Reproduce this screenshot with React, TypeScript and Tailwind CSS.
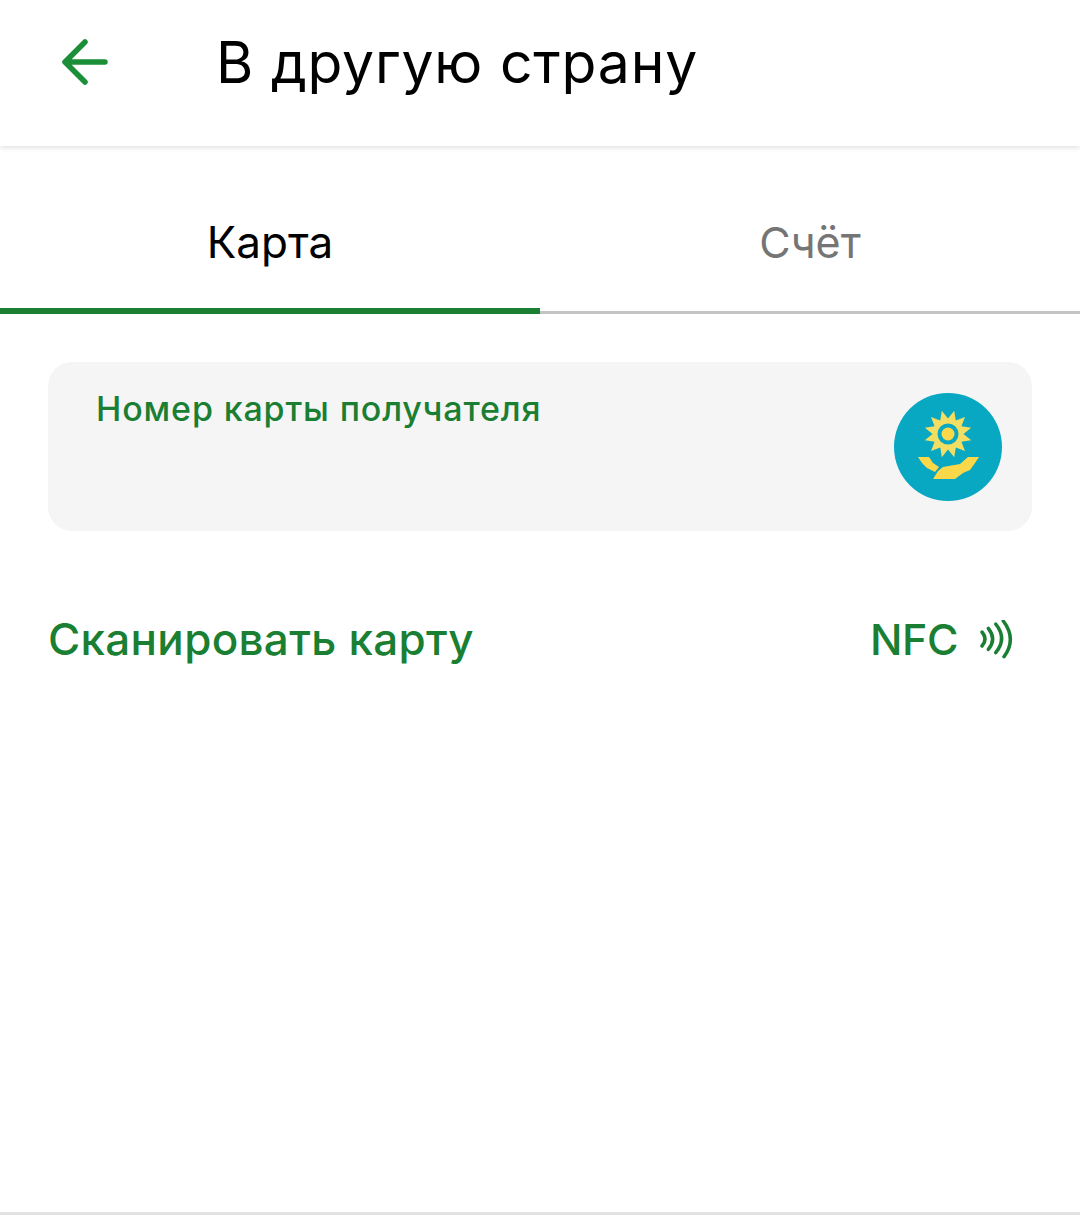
const sunRays = Array.from({ length: 24 }, (_, i) => {
  const angle = (i * Math.PI) / 12 - Math.PI / 2 + Math.PI / 12;
  const r = i % 2 === 0 ? 24 : 15.5;
  return `${(54 + r * Math.cos(angle)).toFixed(1)},${(41 + r * Math.sin(angle)).toFixed(1)}`;
}).join(" ");

function KzFlag() {
  return (
    <svg width="108" height="108" viewBox="0 0 108 108" className="shrink-0">
      <circle cx="54" cy="54" r="54" fill="#08a8c2" />
      <polygon points={sunRays} fill="#f2de62" />
      <circle cx="54" cy="41" r="10.5" fill="#08a8c2" />
      <circle cx="54" cy="41" r="6.5" fill="#fbd84a" />
      <polygon
        points="24,64 35,64 39,70 45,74 41,79 33,75 28,70"
        fill="#fbd84a"
      />
      <polygon
        points="85,64 74,64 66,71 49,74 44,78 39,86 61,86 69,80 76,77 81,70"
        fill="#fbd84a"
      />
    </svg>
  );
}

function NfcWaves() {
  return (
    <svg
      width="33"
      height="40"
      viewBox="0 0 33 40"
      fill="none"
      stroke="#1a7f32"
      strokeWidth="3.5"
      strokeLinecap="round"
      className="shrink-0"
    >
      <path d="M2 12Q8 19 2 26" />
      <path d="M8.3 8.3Q17 19 8.3 29.3" />
      <path d="M15.7 4Q27.5 18.5 15.7 32.7" />
      <path d="M23.3 1Q37 19 24 36.7" />
    </svg>
  );
}

export default function App() {
  return (
    <div className="w-[1080px] h-[1225px] overflow-hidden bg-white flex flex-col font-['Inter',sans-serif]">
      {/* Header */}
      <header className="h-[146px] shrink-0 flex items-center pl-[60px] pb-[20px] shadow-[0_2px_5px_rgba(0,0,0,0.12)]">
        <svg
          width="50"
          height="48"
          viewBox="0 0 50 48"
          fill="none"
          stroke="#1a8f37"
          strokeWidth="5.5"
          strokeLinecap="round"
          strokeLinejoin="round"
          className="shrink-0"
        >
          <path d="M5 23H45M25 3L5 23L25 43" />
        </svg>
        <h1 className="ml-[106px] -mt-[2px] text-[57px] tracking-[0.8px] leading-none font-normal text-black">
          В другую страну
        </h1>
      </header>

      {/* Tabs */}
      <div className="flex h-[168px] shrink-0">
        <div className="flex-1 flex items-center justify-center pt-[30px] border-b-[6px] border-[#1a7f32] text-[44px] text-black">
          Карта
        </div>
        <div className="flex-1 flex flex-col justify-end">
          <div className="flex-1 flex items-center justify-center pt-[27px] text-[43px] text-[#757575]">
            Счёт
          </div>
          <div className="h-[3px] bg-[#c4c4c4]" />
        </div>
      </div>

      {/* Card number */}
      <div className="mt-[48px] mx-[48px] h-[169px] rounded-[24px] bg-[#f5f5f6] flex justify-between pl-[48px] pr-[30px] pt-[31px]">
        <span className="text-[34px] leading-[32px] font-medium tracking-[0.85px] text-[#1a7f32]">
          Номер карты получателя
        </span>
        <KzFlag />
      </div>

      {/* Scan */}
      <div className="mt-[79px] mx-[48px] flex items-center justify-between pr-[19px] text-[44px] leading-[60px] font-medium text-[#1a7f32]">
        <span className="-mt-[1px] tracking-[0.3px]">Сканировать карту</span>
        <span className="flex items-center gap-[22px]">
          <span className="-mt-[1px] text-[43px] tracking-[-0.5px]">NFC</span>
          <NfcWaves />
        </span>
      </div>

      <div className="flex-1" />
      <div className="h-[3px] bg-[#e2e2e2] mb-[10px]" />
    </div>
  );
}
